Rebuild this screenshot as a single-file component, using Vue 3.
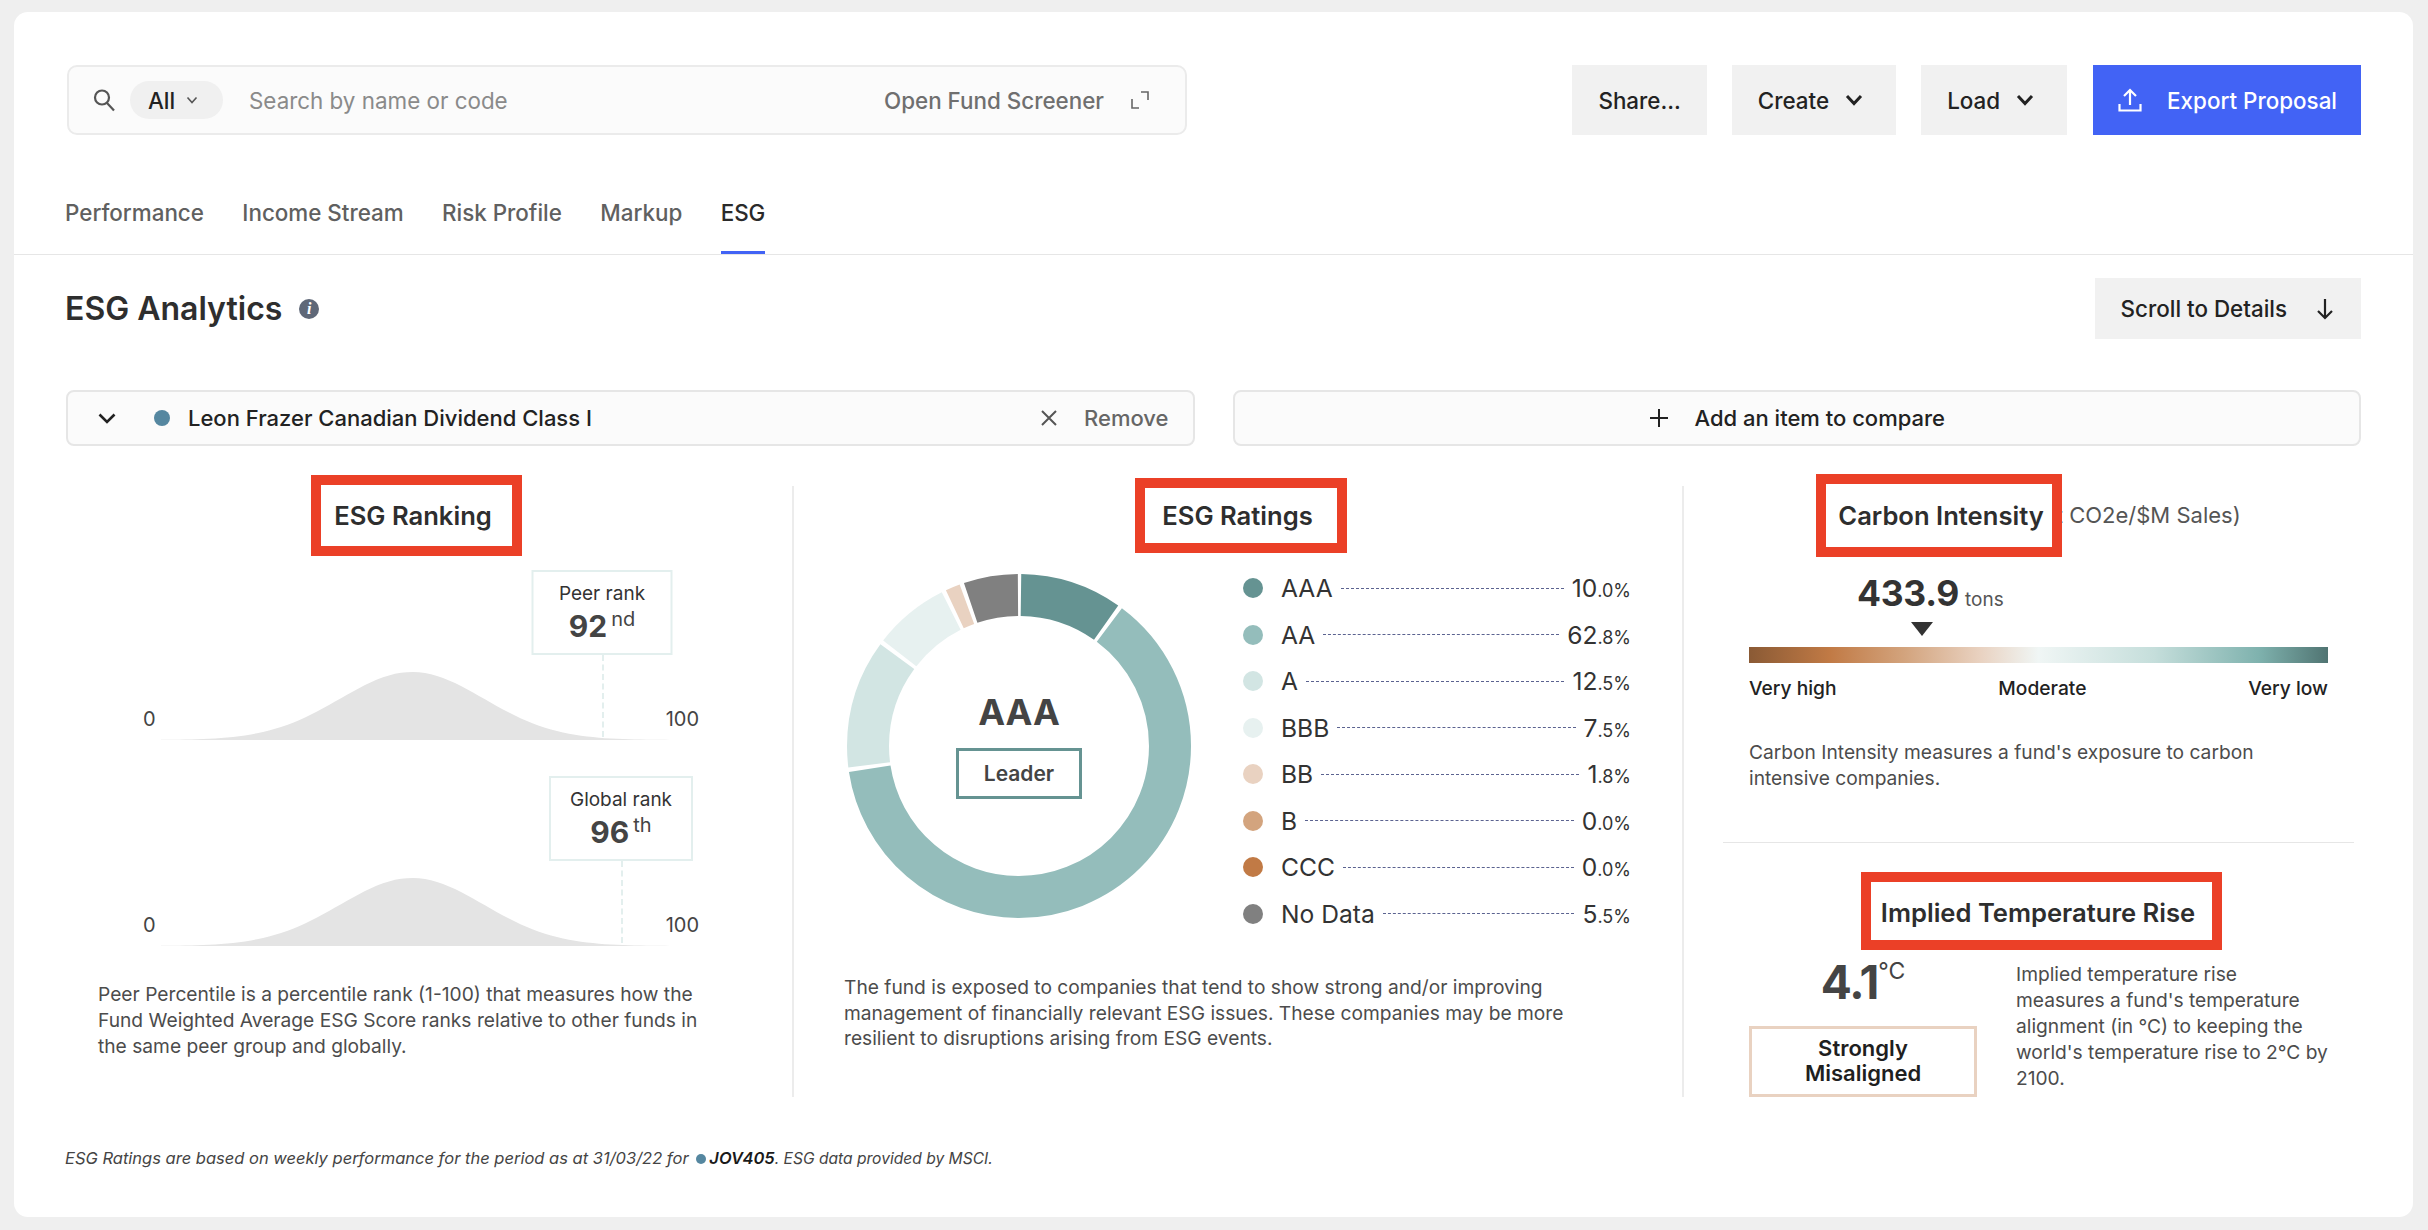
<script setup>
import { computed } from 'vue'

const tabs = ['Performance', 'Income Stream', 'Risk Profile', 'Markup', 'ESG']

const ranks = [
  { label: 'Peer rank', rank: 92, suffix: 'nd', x: 459, w: 141 },
  { label: 'Global rank', rank: 96, suffix: 'th', x: 478, w: 144 }
]

const ratings = [
  { name: 'AAA', whole: '10', dec: '.0%', pct: 10, color: '#659392' },
  { name: 'AA', whole: '62', dec: '.8%', pct: 62.8, color: '#94bdbb' },
  { name: 'A', whole: '12', dec: '.5%', pct: 12.5, color: '#d2e5e3' },
  { name: 'BBB', whole: '7', dec: '.5%', pct: 7.5, color: '#e7f1f0' },
  { name: 'BB', whole: '1', dec: '.8%', pct: 1.8, color: '#e9d2c1' },
  { name: 'B', whole: '0', dec: '.0%', pct: 0, color: '#d3a47e' },
  { name: 'CCC', whole: '0', dec: '.0%', pct: 0, color: '#c17a45' },
  { name: 'No Data', whole: '5', dec: '.5%', pct: 5.5, color: '#808080' }
]

// pathLength is 100 so the percentages can be used directly as dash lengths
const segments = computed(() => {
  const gap = 0.42
  let start = 0
  const list = []
  for (const r of ratings) {
    if (r.pct > 0) {
      list.push({
        color: r.color,
        dash: `${r.pct - gap} ${100 - r.pct + gap}`,
        offset: -(start + gap / 2)
      })
    }
    start += r.pct
  }
  return list
})

const bellPath = computed(() => {
  let d = 'M0 68'
  for (let x = 0; x <= 509; x += 6) {
    const y = 68 - 68 * Math.exp(-0.5 * Math.pow((x - 251) / 72, 2))
    d += ` L${x} ${y.toFixed(2)}`
  }
  return d + ' L509 68 Z'
})
</script>

<template>
  <div class="page">
    <div class="card">
      <div class="top">
        <div class="search">
          <svg class="search-icon" width="24" height="24" viewBox="0 0 24 24" fill="none" stroke="#555" stroke-width="2.2">
            <circle cx="10" cy="9.5" r="7" />
            <path d="M15 15l7 7.5" />
          </svg>
          <div class="pill">All
            <svg width="14" height="14" viewBox="0 0 14 14" fill="none" stroke="#555" stroke-width="1.6"><path d="M2.5 4.5L7 9.5l4.5-5" /></svg>
          </div>
          <span class="placeholder">Search by name or code</span>
          <span class="screener">Open Fund Screener</span>
          <svg class="expand" width="18" height="18" viewBox="0 0 18 18" fill="none" stroke="#666" stroke-width="1.6"><path d="M1 8v9h7M10 1h7v8" /></svg>
        </div>
        <div class="actions">
          <button class="btn">Share...</button>
          <button class="btn has-chev">Create
            <svg width="18" height="12" viewBox="0 0 18 12" fill="none" stroke="#222" stroke-width="3"><path d="M2 2l7 7.5L16 2" /></svg>
          </button>
          <button class="btn has-chev">Load
            <svg width="18" height="12" viewBox="0 0 18 12" fill="none" stroke="#222" stroke-width="3"><path d="M2 2l7 7.5L16 2" /></svg>
          </button>
          <button class="btn primary">
            <svg width="24" height="24" viewBox="0 0 24 24" fill="none" stroke="#fff" stroke-width="2.2"><path d="M12 17V2M6 8l6-6 6 6M1.5 16v6.5h21V16" /></svg>
            Export Proposal
          </button>
        </div>
      </div>

      <div class="tabs">
        <div v-for="t in tabs" :key="t" class="tab" :class="{ active: t === 'ESG' }">{{ t }}</div>
      </div>

      <div class="body">
        <div class="head">
          <h1>ESG Analytics
            <span class="info">i</span>
          </h1>
          <button class="btn scroll">Scroll to Details
            <svg width="20" height="22" viewBox="0 0 20 22" fill="none" stroke="#222" stroke-width="2.2"><path d="M10 1v19M3 13l7 7 7-7" /></svg>
          </button>
        </div>

        <div class="compare">
          <div class="cmp-box">
            <svg class="cmp-chev" width="18" height="11" viewBox="0 0 18 11" fill="none" stroke="#222" stroke-width="2.6"><path d="M1.5 1.5L9 9l7.5-7.5" /></svg>
            <span class="dot"></span>
            <span class="fund">Leon Frazer Canadian Dividend Class I</span>
            <svg class="x" width="18" height="18" viewBox="0 0 18 18" fill="none" stroke="#555" stroke-width="2"><path d="M2 2l14 14M16 2L2 16" /></svg>
            <span class="remove">Remove</span>
          </div>
          <div class="cmp-box add">
            <svg width="20" height="20" viewBox="0 0 20 20" fill="none" stroke="#222" stroke-width="2"><path d="M10 1v18M1 10h18" /></svg>
            <span>Add an item to compare</span>
          </div>
        </div>

        <div class="grid">
          <section class="col col-rank">
            <div class="title-row"><h2 class="marked m-rank">ESG Ranking</h2></div>
            <div class="charts">
              <div v-for="r in ranks" :key="r.label" class="chart">
                <div class="callout" :style="{ left: r.x + 'px', width: r.w + 'px' }">
                  <div class="c-label">{{ r.label }}</div>
                  <div class="c-num">{{ r.rank }}<sup>{{ r.suffix }}</sup></div>
                </div>
                <span class="c-line" :style="{ left: r.x + 'px' }"></span>
                <div class="axis">
                  <span class="a-min">0</span>
                  <svg class="bell" width="509" height="68" viewBox="0 0 509 68"><path :d="bellPath" fill="#e4e4e4" /></svg>
                  <span class="a-max">100</span>
                </div>
              </div>
            </div>
            <p class="desc d-rank">Peer Percentile is a percentile rank (1-100) that measures how the Fund Weighted Average ESG Score ranks relative to other funds in the same peer group and globally.</p>
          </section>

          <section class="col col-ratings">
            <div class="title-row"><h2 class="marked m-ratings">ESG Ratings</h2></div>
            <div class="ratings">
              <div class="donut">
                <svg width="344" height="344" viewBox="0 0 344 344">
                  <g transform="rotate(-90 172 172)" fill="none" stroke-width="42">
                    <circle v-for="s in segments" :key="s.color" cx="172" cy="172" r="151" pathLength="100"
                      :stroke="s.color" :stroke-dasharray="s.dash" :stroke-dashoffset="s.offset" />
                  </g>
                </svg>
                <div class="donut-mid">
                  <div class="grade">AAA</div>
                  <div class="leader">Leader</div>
                </div>
              </div>
              <ul class="legend">
                <li v-for="r in ratings" :key="r.name">
                  <span class="l-dot" :style="{ background: r.color }"></span>
                  <span class="l-name">{{ r.name }}</span>
                  <span class="l-line"></span>
                  <span class="l-val">{{ r.whole }}<small>{{ r.dec }}</small></span>
                </li>
              </ul>
            </div>
            <p class="desc d-ratings">The fund is exposed to companies that tend to show strong and/or improving management of financially relevant ESG issues. These companies may be more resilient to disruptions arising from ESG events.</p>
          </section>

          <section class="col col-carbon">
            <div class="title-row t-carbon">
              <h2 class="marked m-carbon">Carbon Intensity</h2>
              <span class="unit">(t CO2e/$M Sales)</span>
            </div>
            <div class="amount"><b>433.9</b><span>tons</span></div>
            <div class="tri"></div>
            <div class="scale"></div>
            <div class="scale-labels"><span>Very high</span><span>Moderate</span><span>Very low</span></div>
            <p class="desc d-carbon">Carbon Intensity measures a fund's exposure to carbon intensive companies.</p>
            <div class="sep"></div>
            <div class="title-row t-temp"><h2 class="marked m-temp">Implied Temperature Rise</h2></div>
            <div class="temp">
              <div class="temp-left">
                <div class="deg">4.1<sup>°C</sup></div>
                <div class="align">Strongly Misaligned</div>
              </div>
              <p class="desc d-temp">Implied temperature rise measures a fund's temperature alignment (in °C) to keeping the world's temperature rise to 2°C by 2100.</p>
            </div>
          </section>
        </div>

        <p class="foot">ESG Ratings are based on weekly performance for the period as at 31/03/22 for <span class="foot-dot"></span><b>JOV405</b><span class="foot-end">. ESG data provided by MSCI.</span></p>
      </div>
    </div>
  </div>
</template>

<style>
html, body {
  margin: 0;
  background: #efefef;
}
</style>

<style scoped>
* {
  box-sizing: border-box;
}
.page {
  height: 1230px;
  padding: 12px 15px 13px 14px;
  font-family: Inter, "Liberation Sans", sans-serif;
  color: #333;
}
.card {
  height: 1205px;
  background: #fff;
  border-radius: 14px;
}
.top {
  display: flex;
  justify-content: space-between;
  padding: 53px 52px 0 53px;
}
.search {
  width: 1120px;
  height: 70px;
  display: flex;
  align-items: center;
  padding: 0 36px 0 23px;
  background: #fbfbfb;
  border: 2px solid #ebebeb;
  border-radius: 10px;
}
.pill {
  display: flex;
  align-items: center;
  gap: 10px;
  width: 93px;
  height: 38px;
  margin-left: 14px;
  padding-left: 18px;
  border-radius: 19px;
  background: #f0f0f0;
  font-size: 22.4px;
  font-weight: 500;
  color: #222;
}
.placeholder {
  margin-left: 26px;
  font-size: 22.4px;
  color: #8a8a8a;
}
.screener {
  margin-left: auto;
  font-size: 22.4px;
  font-weight: 500;
  color: #6f6f6f;
}
.expand {
  margin-left: 27px;
}
.actions {
  display: flex;
  gap: 25px;
}
.btn {
  display: flex;
  align-items: center;
  gap: 16px;
  height: 70px;
  padding: 0 26px;
  border: 0;
  background: #f1f1f1;
  font-family: inherit;
  font-size: 22.4px;
  font-weight: 500;
  color: #222;
}
.has-chev {
  padding-right: 33px;
}
.primary {
  gap: 25px;
  margin-left: 1px;
  padding: 0 24px 0 25px;
  background: #4263f5;
  color: #fff;
}
.tabs {
  display: flex;
  gap: 38.4px;
  margin-top: 61px;
  padding-left: 51px;
  border-bottom: 1px solid #e6e6e6;
}
.tab {
  height: 58px;
  line-height: 34px;
  font-size: 22.4px;
  font-weight: 500;
  color: #606060;
  border-bottom: 3px solid transparent;
  padding-bottom: 21px;
}
.tab.active {
  color: #2a2a2a;
  border-bottom-color: #4263f5;
}
.body {
  padding: 23px 52px 0;
}
.head {
  display: flex;
  justify-content: space-between;
  align-items: center;
}
h1 {
  display: flex;
  align-items: center;
  gap: 17px;
  margin: 0 0 0 -1px;
  font-size: 32px;
  font-weight: 600;
  color: #2e2e2e;
}
.info {
  width: 20px;
  height: 20px;
  border-radius: 50%;
  background: #5f6878;
  color: #fff;
  font-family: "Liberation Serif", serif;
  font-style: italic;
  font-weight: 700;
  font-size: 16px;
  line-height: 20px;
  text-align: center;
}
.scroll {
  height: 61px;
  gap: 28px;
}
.compare {
  display: grid;
  grid-template-columns: 1fr 1fr;
  gap: 38px;
  margin-top: 51px;
}
.cmp-box {
  height: 56px;
  display: flex;
  align-items: center;
  padding: 0 24px 0 30px;
  background: #fbfbfb;
  border: 2px solid #e6e6e6;
  border-radius: 8px;
  font-size: 22px;
  font-weight: 500;
  color: #222;
}
.dot {
  width: 16px;
  height: 16px;
  margin-left: 38px;
  border-radius: 50%;
  background: #5587a0;
}
.fund {
  margin-left: 18px;
}
.x {
  margin-left: auto;
}
.remove {
  margin-left: 26px;
  color: #666;
}
.add {
  justify-content: center;
  gap: 26px;
  padding: 0;
}
.grid {
  display: grid;
  grid-template-columns: 727px 891px minmax(0, 1fr);
  height: 611px;
  margin-top: 40px;
}
.col-ratings {
  border-left: 2px solid #ececec;
  border-right: 2px solid #ececec;
  margin-left: -1px;
  padding-left: 50px;
}
.col-rank {
  width: 694px;
}
.col-carbon {
  padding: 0 33px 0 65px;
}
.title-row {
  display: flex;
  justify-content: center;
  align-items: center;
  height: 58px;
}
.col-ratings > .title-row {
  margin-left: -50px;
}
h2 {
  margin: 0;
  font-size: 25.6px;
  font-weight: 600;
  line-height: 32px;
  color: #2e2e2e;
  white-space: nowrap;
}
/* red annotation frames painted over the headings, they must not push the layout */
.marked {
  position: relative;
  z-index: 1;
  flex: none;
  border: 10px solid #eb4027;
  background: #fff;
}
.m-rank {
  margin-left: 7px;
  padding: 15px 20px 14px 13px;
}
.m-ratings {
  margin-left: 6px;
  padding: 12px 24px 11px 17px;
}
.m-carbon {
  padding: 16px 8px 15px 12px;
}
.t-carbon {
  margin-left: -20px;
}
.m-temp {
  margin-left: 6px;
  padding: 15px 17px 11px 10px;
}
.unit {
  margin-left: -14px;
  font-size: 22px;
  color: #555;
  white-space: nowrap;
}
.charts {
  margin-top: 26px;
  display: flex;
  flex-direction: column;
  gap: 36px;
}
.chart {
  position: relative;
  height: 170px;
  width: 556px;
  margin-left: 77px;
}
.callout {
  position: absolute;
  top: 0;
  transform: translateX(-50%);
  height: 85px;
  padding-top: 8px;
  border: 2px solid #e3efee;
  background: #fff;
  text-align: center;
  white-space: nowrap;
}
.c-label {
  font-size: 19px;
  line-height: 28px;
  color: #333;
}
.c-num {
  font-size: 30px;
  line-height: 36px;
  font-weight: 700;
  color: #444;
}
.c-num sup {
  margin-left: 4px;
  font-size: 20px;
  font-weight: 400;
  line-height: 0;
  vertical-align: 11px;
}
.c-line {
  position: absolute;
  top: 85px;
  height: 82px;
  border-left: 2px dashed #e3efee;
  z-index: 1;
}
.axis {
  position: absolute;
  left: 0;
  right: 0;
  bottom: 0;
  height: 68px;
}
.a-min, .a-max {
  position: absolute;
  top: 32px;
  font-size: 20px;
  line-height: 30px;
  color: #444;
}
.a-min {
  left: 0;
}
.a-max {
  right: 0;
}
.bell {
  position: absolute;
  left: 18px;
  top: 0;
}
.desc {
  margin: 0;
  font-size: 19.2px;
  line-height: 26px;
  color: #4c4c4c;
}
.d-rank {
  width: 620px;
  margin: 35px 0 0 32px;
}
.ratings {
  display: flex;
  height: 344px;
  margin-top: 30px;
  padding-left: 3px;
}
.donut {
  display: grid;
  place-items: center;
  width: 344px;
  height: 344px;
}
.donut svg, .donut-mid {
  grid-area: 1 / 1;
}
.donut-mid {
  display: flex;
  flex-direction: column;
  align-items: center;
  gap: 14px;
  margin-top: -3px;
}
.grade {
  font-size: 36px;
  line-height: 44px;
  font-weight: 700;
  color: #444;
}
.leader {
  width: 126px;
  height: 51px;
  line-height: 45px;
  border: 3px solid #659392;
  text-align: center;
  font-size: 21px;
  font-weight: 600;
  color: #444;
}
.legend {
  width: 388px;
  margin: -9px 0 0 52px;
  padding: 0;
  list-style: none;
}
.legend li {
  display: flex;
  align-items: center;
  height: 46.5px;
}
.l-dot {
  width: 20px;
  height: 20px;
  margin-right: 18px;
  border-radius: 50%;
}
.l-name {
  font-size: 24.6px;
  color: #333;
}
.l-line {
  flex: 1;
  margin: 0 8px;
  border-top: 1px dashed #5b6390;
}
.l-val {
  font-size: 24.6px;
  color: #333;
}
.l-val small {
  font-size: 18px;
}
.d-ratings {
  width: 735px;
  margin-top: 57px;
  line-height: 25.5px;
}
.amount {
  display: flex;
  align-items: baseline;
  gap: 6px;
  height: 46px;
  margin-top: 27px;
  padding-left: 108px;
}
.amount b {
  font-size: 35.5px;
  line-height: 46px;
  font-weight: 700;
  letter-spacing: -0.3px;
}
.amount span {
  font-size: 19px;
  color: #555;
}
.tri {
  width: 0;
  height: 0;
  margin: 5px 0 0 162px;
  border-left: 11px solid transparent;
  border-right: 11px solid transparent;
  border-top: 14px solid #333;
}
.scale {
  height: 16px;
  margin-top: 11px;
  background: linear-gradient(90deg, #8a5a35 0%, #c17a45 14%, #d3a47e 27%, #e9d2c1 40%, #f0f6f5 50%, #c5dedb 70%, #7fb2ae 88%, #507472 100%);
}
.scale-labels {
  display: flex;
  justify-content: space-between;
  margin-top: 12px;
  font-size: 19.2px;
  line-height: 26px;
  font-weight: 500;
  color: #222;
}
.d-carbon {
  margin-top: 38px;
}
.sep {
  margin: 51px -26px 0 -26px;
  border-top: 1px solid #e6e6e6;
}
.t-temp {
  margin-top: 39px;
}
.temp {
  display: flex;
  gap: 39px;
  margin-top: 15px;
}
.temp-left {
  flex: none;
  width: 228px;
}
.deg {
  height: 56px;
  margin-top: -1px;
  font-size: 46px;
  line-height: 56px;
  font-weight: 700;
  letter-spacing: -1px;
  color: #444;
  text-align: center;
}
.deg sup {
  font-size: 23px;
  font-weight: 400;
  letter-spacing: 0;
  line-height: 0;
  vertical-align: 20px;
}
.align {
  height: 71px;
  margin-top: 16px;
  padding: 7px 20px 0;
  border: 3px solid #e9d2c1;
  text-align: center;
  font-size: 22px;
  line-height: 25px;
  font-weight: 600;
  color: #1f1f1f;
}
.d-temp {
  width: 312px;
  margin-top: 6px;
}
.foot {
  margin: 51px 0 0 -1px;
  font-size: 16.5px;
  line-height: 20px;
  font-style: italic;
  color: #444;
}
.foot b {
  font-weight: 600;
  color: #1a1a1a;
}
.foot-end {
  font-size: 15.6px;
}
.foot-dot {
  display: inline-block;
  width: 10px;
  height: 10px;
  margin: 0 3px 0 3px;
  border-radius: 50%;
  background: #5587a0;
}
</style>
